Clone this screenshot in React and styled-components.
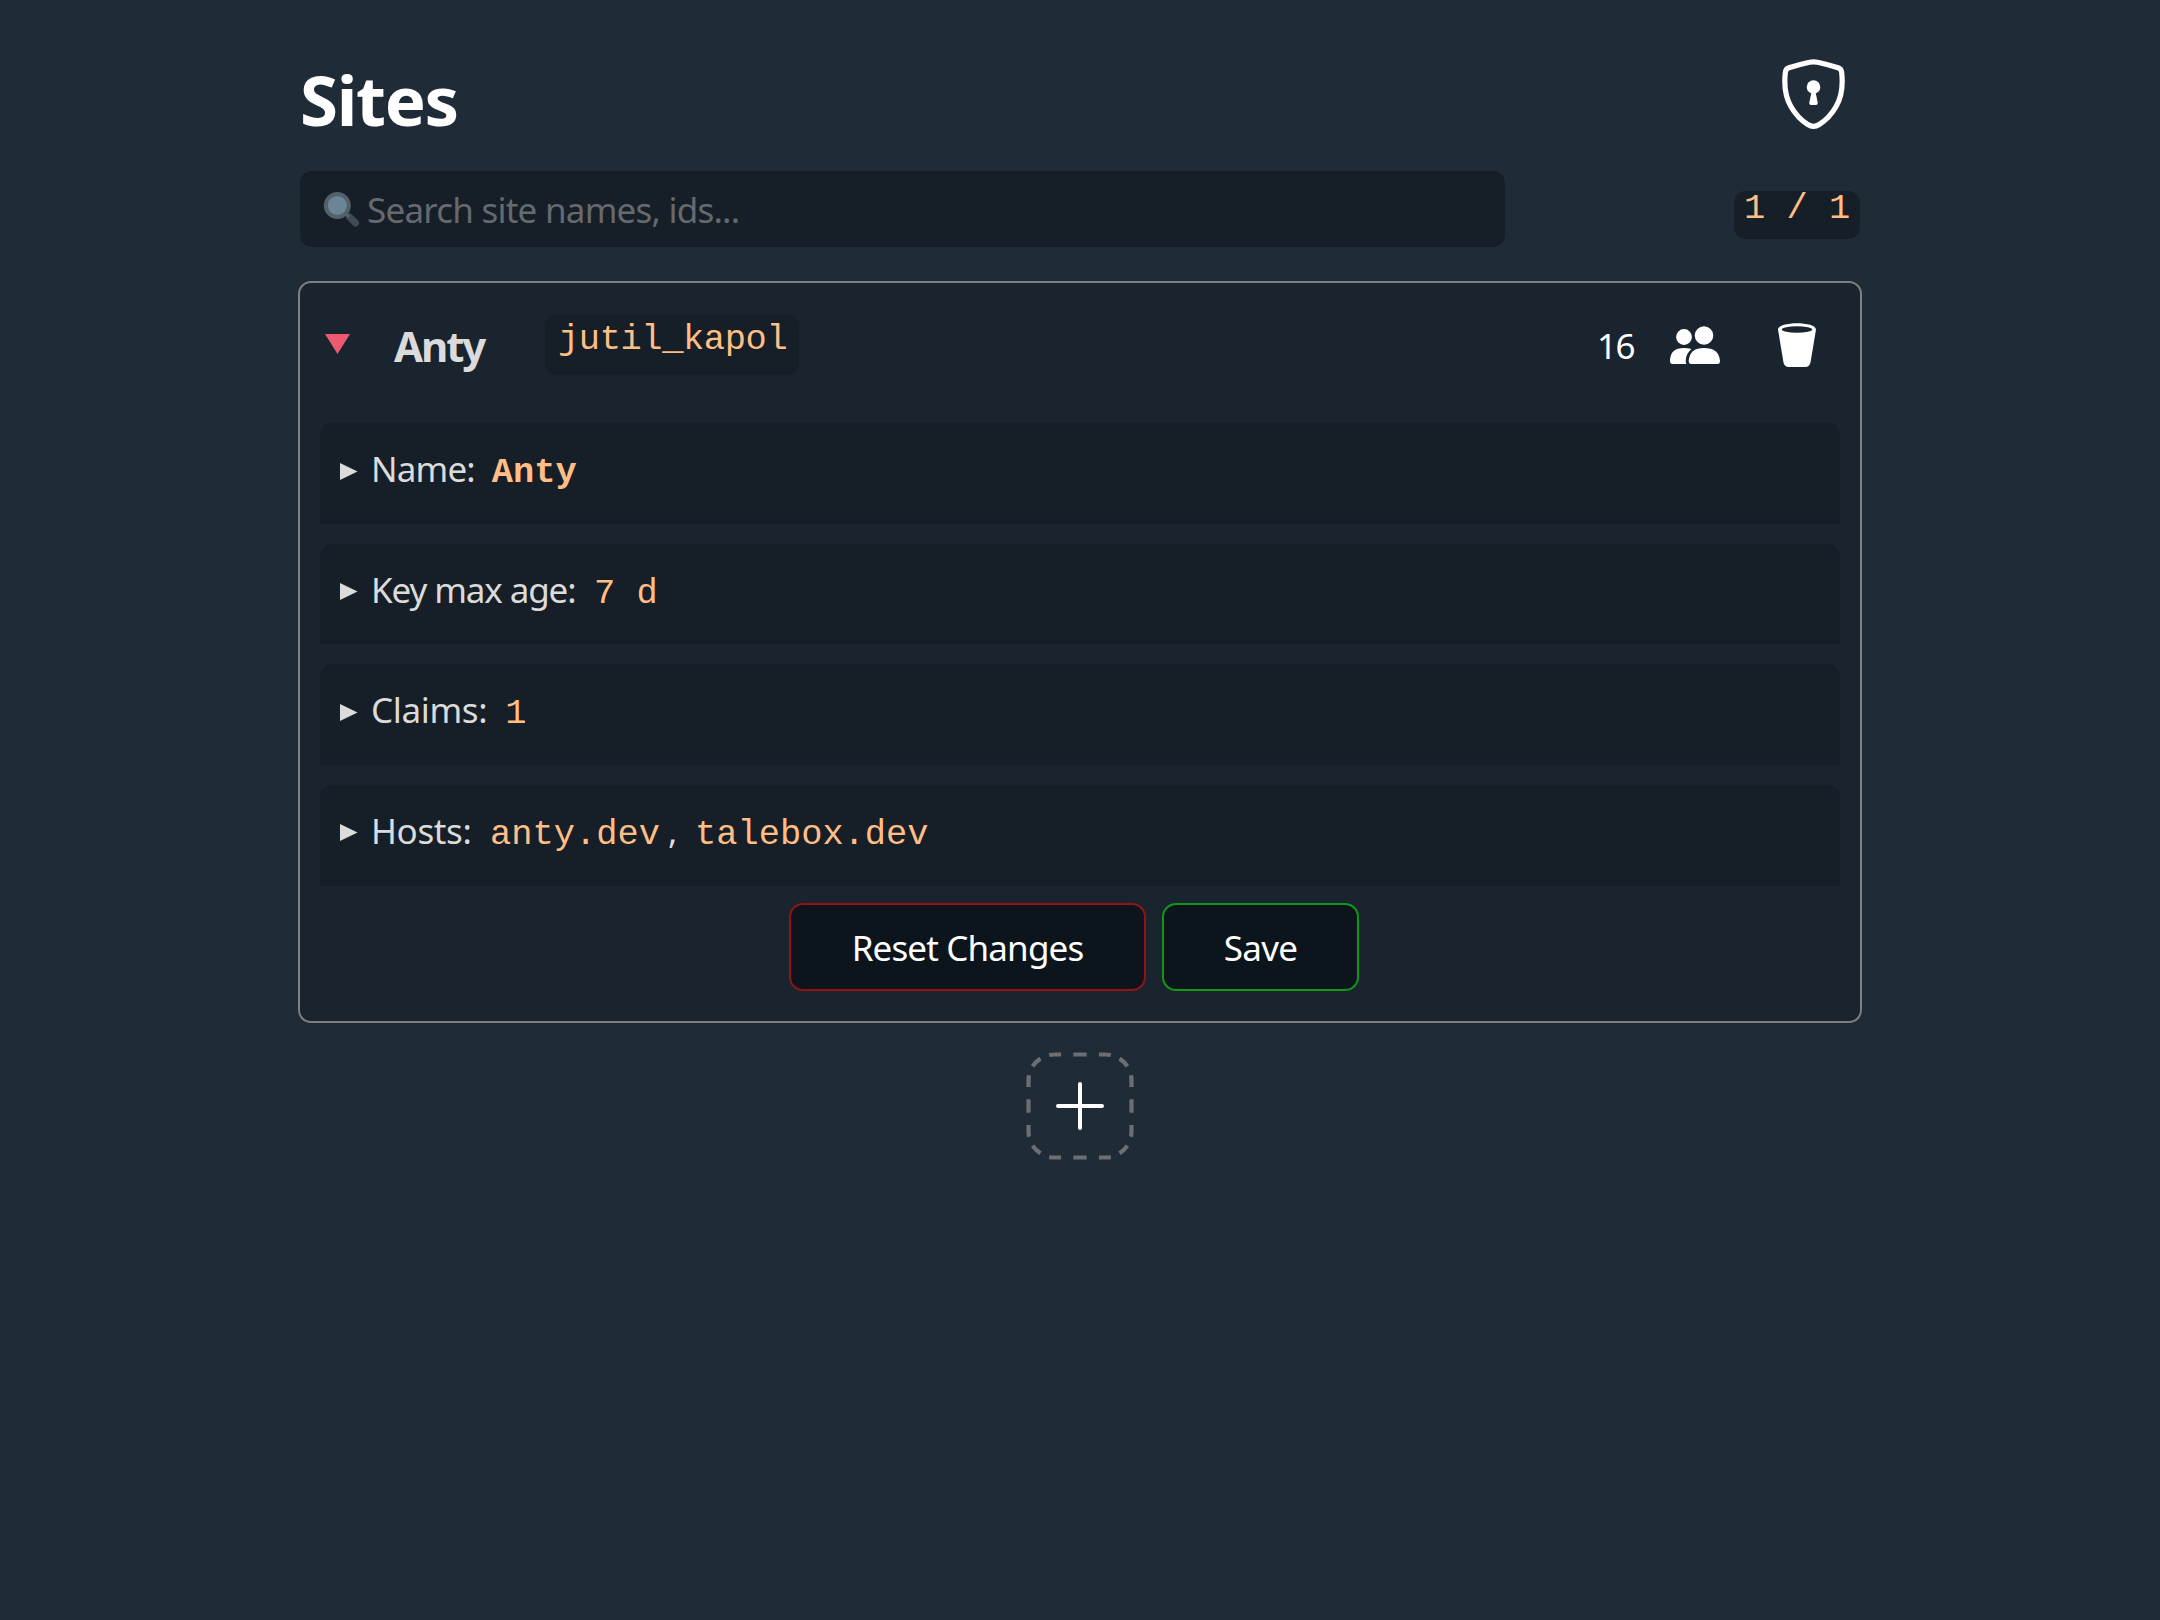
import React from "react";
import styled, { createGlobalStyle } from "styled-components";

const Global = createGlobalStyle`
  * { box-sizing: border-box; }
  body {
    margin: 0;
    background: #202b38;
    color: #dbdbdb;
    font-family: "Noto Sans", "Open Sans", sans-serif;
    font-size: 35px;
  }
`;

const Page = styled.main`
  width: 1560px;
  min-height: 1620px;
  margin: 0 auto;
  padding-top: 58px;
  display: flex;
  flex-direction: column;
`;

const Header = styled.header`
  height: 80px;
  margin-bottom: 33px;
  padding-right: 15px;
  display: flex;
  justify-content: space-between;
`;

const Title = styled.h1`
  margin: 0;
  color: #fff;
  font-size: 69px;
  font-weight: 700;
  line-height: 82px;
  letter-spacing: ${(p) => p.$track}px;
`;

const ShieldSvg = styled.svg`
  width: 63px;
  height: 71px;
  margin-top: 1px;
`;

const SearchRow = styled.div`
  display: flex;
  justify-content: space-between;
  align-items: flex-start;
  height: 76px;
  margin-bottom: 34px;
`;

const SearchBox = styled.div`
  width: 1205px;
  height: 76px;
  padding-left: 23px;
  display: flex;
  align-items: center;
  gap: 7px;
  border-radius: 12px;
  background: #161f27;
  color: #66696d;
`;

const Label = styled.span`
  margin-left: ${(p) => p.$gap || 0}px;
  letter-spacing: ${(p) => p.$track || 0}px;
  white-space: pre;
`;

const Placeholder = styled(Label)`
  padding-top: 1px;
`;

const Code = styled.code`
  font-family: "Liberation Mono", monospace;
  font-size: 35.4px;
  font-weight: ${(p) => (p.$bold ? 700 : 400)};
  letter-spacing: ${(p) => p.$track || 0}px;
  color: #ffbe85;
  white-space: pre;
`;

const Badge = styled(Code)`
  display: block;
  width: ${(p) => p.$w}px;
  height: ${(p) => p.$h}px;
  margin-top: ${(p) => p.$drop || 0}px;
  padding-left: ${(p) => p.$pad}px;
  line-height: ${(p) => p.$line}px;
  border-radius: 12px;
  background: #161f27;
`;

const Card = styled.section`
  width: 1564px;
  height: 742px;
  margin: 0 -2px 29px;
  padding: 0 20px;
  border: 2px solid #7f7f7f;
  border-radius: 13px;
  background: #1a242f;
`;

const CardHead = styled.div`
  height: 124px;
  margin-bottom: 16px;
  padding: 0 24px 0 5px;
  display: flex;
  align-items: center;
`;

const Arrow = styled.svg`
  width: 25px;
  height: 20px;
  margin: 0 44px 3px 0;
`;

const SiteName = styled.strong`
  width: 151px;
  font-size: 42px;
  line-height: 60px;
  padding-top: 1px;
  letter-spacing: ${(p) => p.$track}px;
`;

const Count = styled.span`
  margin-left: auto;
  margin-right: 36px;
  color: #fff;
  letter-spacing: -1.5px;
`;

const PeopleSvg = styled.svg`
  width: 50px;
  height: 38px;
  margin-right: 58px;
`;

const BucketSvg = styled.svg`
  width: 38px;
  height: 44px;
`;

const Panels = styled.div`
  display: grid;
  gap: 20px;
`;

const Panel = styled.div`
  height: 100.67px;
  padding: 20px 20px 0;
  display: flex;
  align-items: flex-start;
  border-radius: 12px 12px 0 0;
  background: #161f27;
  line-height: 51px;
`;

const Caret = styled.svg`
  width: 18px;
  height: 17px;
  margin: 19.500px 13px 0 0;
`;

const Line = styled.div`
  display: flex;
  align-items: baseline;
`;

const Value = styled(Code)`
  margin-left: ${(p) => p.$gap}px;
`;

const Actions = styled.div`
  margin-top: 17px;
  padding-right: 12px;
  display: flex;
  justify-content: center;
  gap: 16px;
`;

const Button = styled.button`
  width: ${(p) => p.$w}px;
  height: 88px;
  padding: 1px 0 0;
  border: 2px solid ${(p) => p.$edge};
  border-radius: 14px;
  background: #0c151c;
  color: #fff;
  font: inherit;
  letter-spacing: ${(p) => p.$track}px;
`;

const AddButton = styled.button`
  align-self: center;
  width: 108px;
  height: 108px;
  padding: 0;
  border: 0;
  background: transparent;
`;

const Shield = () => (
  <ShieldSvg viewBox="0 0 63 71" fill="none">
    <path
      d="M27.5 3.300Q31.5 2.300 35.5 3.300Q46 5.600 56.100 8.800Q59.200 9.800 59.600 13Q62.100 33.500 54.100 47.500Q47.600 59 37.200 65.500Q31.500 69.300 25.800 65.500Q15.400 59 8.900 47.500Q.9 33.500 3.400 13Q3.800 9.800 6.900 8.800Q17 5.600 27.500 3.300Z"
      stroke="#fff"
      strokeWidth="5.200"
    />
    <circle cx="31.500" cy="28" r="6.800" fill="#fff" />
    <path d="M29.500 33h4l2.200 10.500q.3 2.500-2 2.500h-4.400q-2.300 0-2-2.500z" fill="#fff" />
  </ShieldSvg>
);

const Magnifier = () => (
  <svg width="37" height="37" viewBox="0 0 37 37">
    <path d="M26.500 26L32.500 32" stroke="#3e4b55" strokeWidth="7" strokeLinecap="round" />
    <path d="M20 20L26 26" stroke="#52616a" strokeWidth="3" />
    <circle cx="14.300" cy="14.500" r="11.500" fill="#6c8596" stroke="#52616a" strokeWidth="4" />
  </svg>
);

const People = () => (
  <PeopleSvg viewBox="0 0 50 38" fill="#fff">
    <circle cx="14" cy="11" r="7.900" />
    <circle cx="34" cy="9.500" r="9.300" />
    <path d="M2.500 38Q0 38 0 35Q0 22 14 22Q18 22 21.500 23Q16 27.500 15.700 34.500Q15.700 37 16.500 38Z" />
    <path d="M21.500 38Q18.700 38 18.700 35Q19.500 22 34 22Q49 22 50 35Q50 38 47.500 38Z" />
  </PeopleSvg>
);

const Bucket = () => (
  <BucketSvg viewBox="0 0 38 44">
    <path
      d="M0 6.500C0-2 38-2 38 6.500L32.600 39Q31.800 44 27 44H11Q6.200 44 5.400 39Z"
      fill="#fff"
    />
    <ellipse cx="19" cy="6.500" rx="15.200" ry="3.300" fill="#1a242f" />
  </BucketSvg>
);

const AddIcon = () => (
  <svg width="108" height="108" viewBox="0 0 108 108" fill="none">
    <path
      d="M54 2.500H79.500A26 26 0 0 1 105.500 28.500V79.500A26 26 0 0 1 79.500 105.500H28.500A26 26 0 0 1 2.500 79.500V28.500A26 26 0 0 1 28.500 2.500Z"
      pathLength="367.2"
      stroke="#6b6e73"
      strokeWidth="4.200"
      strokeDasharray="6.7 12.3 12 9.4 11 9.4 12 12.3 6.7 0"
    />
    <path d="M54 32V76M32 54H76" stroke="#fff" strokeWidth="4" strokeLinecap="round" />
  </svg>
);

const Row = ({ label, track, children }) => (
  <Panel>
    <Caret viewBox="0 0 18 17">
      <path d="M0 0L17.500 8.500L0 17Z" fill="#dbdbdb" />
    </Caret>
    <Line>
      <Label $track={track}>{label}</Label>
      {children}
    </Line>
  </Panel>
);

export default function App() {
  return (
    <>
      <Global />
      <Page>
        <Header>
          <Title $track={-1.3}>Sites</Title>
          <Shield />
        </Header>
        <SearchRow>
          <SearchBox>
            <Magnifier />
            <Placeholder $track={-0.77}>Search site names, ids...</Placeholder>
          </SearchBox>
          <Badge $w={126} $h={48} $drop={20} $pad={10} $line={37}>1 / 1</Badge>
        </SearchRow>
        <Card>
          <CardHead>
            <Arrow viewBox="0 0 25 20">
              <path d="M0 0H25L12.500 20Z" fill="#eb5a70" />
            </Arrow>
            <SiteName $track={-2.1}>Anty</SiteName>
            <Badge $w={254} $h={60} $pad={13} $line={50} $track={-0.4}>jutil_kapol</Badge>
            <Count>16</Count>
            <People />
            <Bucket />
          </CardHead>
          <Panels>
            <Row label="Name:" track={-0.85}>
              <Value $gap={17} $bold>Anty</Value>
            </Row>
            <Row label="Key max age:" track={-1.12}>
              <Value $gap={18.5}>7 d</Value>
            </Row>
            <Row label="Claims:" track={-0.35}>
              <Value $gap={18}>1</Value>
            </Row>
            <Row label="Hosts:" track={-0.35}>
              <Value $gap={18.5}>anty.dev</Value>
              <Label $gap={8}>, </Label>
              <Value $gap={8.5}>talebox.dev</Value>
            </Row>
          </Panels>
          <Actions>
            <Button $w={357} $edge="#961215" $track={-0.85}>Reset Changes</Button>
            <Button $w={197} $edge="#109618" $track={-0.7}>Save</Button>
          </Actions>
        </Card>
        <AddButton aria-label="Add site">
          <AddIcon />
        </AddButton>
      </Page>
    </>
  );
}
